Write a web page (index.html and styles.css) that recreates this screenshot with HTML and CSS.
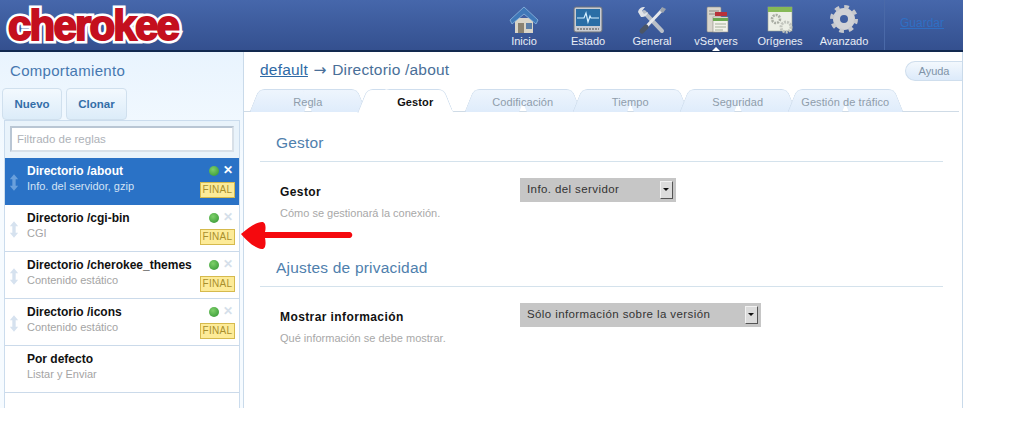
FILE: index.html
```html
<!DOCTYPE html>
<html lang="es">
<head>
    <meta charset="UTF-8">
    <meta name="viewport" content="width=device-width, initial-scale=1.0">
    <title>Cherokee Admin</title>
    <link rel="stylesheet" href="styles.css">
</head>
<body>
    <div class="page">
        <header class="topbar">
            <div class="logo" data-text="cherokee">cherokee</div>
            <nav class="topnav">
                <a class="nav-item">
                    <svg width="30" height="28" viewBox="0 0 30 28">
                        <path d="M6 12h18v15H6z" fill="#d9d4c8"/>
                        <path d="M9 17h6v10H9z" fill="#8a8272"/>
                        <path d="M17 17h6v6h-6z" fill="#5d7fa8"/>
                        <path d="M1 14 15 1l14 13-2 4L15 8 3 18z" fill="#3f78b8" stroke="#8fb8de" stroke-width=".8"/>
                    </svg>
                    <span>Inicio</span>
                </a>
                <a class="nav-item">
                    <svg width="30" height="28" viewBox="0 0 30 28">
                        <rect x="1" y="1" width="28" height="25" rx="2" fill="#c9ccd2" stroke="#6d7078"/>
                        <rect x="3" y="3" width="24" height="17" fill="#2a6ea6"/>
                        <path d="M4 12h7l2-5 2 9 2-6 1 2h8" fill="none" stroke="#d6f0ff" stroke-width="1.2"/>
                        <path d="M4 23h22" stroke="#777" stroke-width="1.5" stroke-dasharray="2 1"/>
                    </svg>
                    <span>Estado</span>
                </a>
                <a class="nav-item">
                    <svg width="30" height="28" viewBox="0 0 30 28">
                        <path d="M7 6 25 25" stroke="#b9bfc8" stroke-width="4" stroke-linecap="round"/>
                        <path d="M1 6a6 6 0 0 1 7-5L5 5l2 3 4-2a6 6 0 0 1-7 5z" fill="#dfe3e8"/>
                        <path d="M26 3 9 21" stroke="#e6e8ec" stroke-width="3"/>
                        <path d="M9 21 5 25" stroke="#4a5566" stroke-width="5" stroke-linecap="round"/>
                        <path d="M25 1l4 2-3 4-3-2z" fill="#9aa2ac"/>
                    </svg>
                    <span>General</span>
                </a>
                <a class="nav-item is-active">
                    <svg width="30" height="30" viewBox="0 0 30 30">
                        <rect x="6" y="3" width="14" height="25" rx="1" fill="#d8d5cc" stroke="#8d8a82" stroke-width=".6"/>
                        <path d="M8 7h10M8 10h10" stroke="#8d8a82"/>
                        <rect x="14" y="8" width="12" height="4" fill="#b8323a"/>
                        <rect x="12" y="13" width="15" height="15" fill="#f2f2ea" stroke="#8d8a82" stroke-width=".6"/>
                        <rect x="12" y="14" width="15" height="3" fill="#6aa84f"/>
                        <path d="M14 20h11M14 23h11M14 26h8" stroke="#a5b09a"/>
                    </svg>
                    <span>vServers</span>
                </a>
                <a class="nav-item">
                    <svg width="30" height="30" viewBox="0 0 30 30">
                        <rect x="3" y="3" width="24" height="24" fill="#ecefe6" stroke="#9ea394" stroke-width=".6"/>
                        <rect x="3" y="3" width="24" height="5" fill="#86b956"/>
                        <circle cx="11" cy="15" r="4" fill="none" stroke="#a9ada4" stroke-width="2.6" stroke-dasharray="2 1"/>
                        <circle cx="21" cy="23" r="5" fill="none" stroke="#c2c5be" stroke-width="3" stroke-dasharray="2 1"/>
                    </svg>
                    <span>Orígenes</span>
                </a>
                <a class="nav-item">
                    <svg width="30" height="30" viewBox="0 0 30 30">
                        <circle cx="15" cy="15" r="7.5" fill="none" stroke="#d0d2d6" stroke-width="7"/>
                        <circle cx="15" cy="15" r="12" fill="none" stroke="#c6c8cd" stroke-width="4" stroke-dasharray="4.6 4.8"/>
                    </svg>
                    <span>Avanzado</span>
                </a>
            </nav>
            <div class="save-box"><a class="save-link">Guardar</a></div>
        </header>

        <div class="columns">
            <aside class="sidebar">
                <h2 class="side-title">Comportamiento</h2>
                <div class="side-buttons">
                    <button class="side-btn">Nuevo</button>
                    <button class="side-btn">Clonar</button>
                </div>
                <div class="rule-panel">
                    <div class="filter-wrap">
                        <input class="filter" type="text" placeholder="Filtrado de reglas">
                    </div>
                    <ul class="rule-list">
                        <li class="rule is-selected">
                            <svg class="updown" width="10" height="17" viewBox="0 0 12 20"><path d="M6 0l5 6H8v8h3l-5 6-5-6h3V6H1z"/></svg>
                            <div class="rule-text">
                                <div class="rule-name">Directorio /about</div>
                                <div class="rule-sub">Info. del servidor, gzip</div>
                            </div>
                            <div class="rule-side">
                                <div class="rule-icons"><i class="dot"></i><b class="close">✕</b></div>
                                <span class="final">FINAL</span>
                            </div>
                        </li>
                        <li class="rule">
                            <svg class="updown" width="10" height="17" viewBox="0 0 12 20"><path d="M6 0l5 6H8v8h3l-5 6-5-6h3V6H1z"/></svg>
                            <div class="rule-text">
                                <div class="rule-name">Directorio /cgi-bin</div>
                                <div class="rule-sub">CGI</div>
                            </div>
                            <div class="rule-side">
                                <div class="rule-icons"><i class="dot"></i><b class="close">✕</b></div>
                                <span class="final">FINAL</span>
                            </div>
                        </li>
                        <li class="rule">
                            <svg class="updown" width="10" height="17" viewBox="0 0 12 20"><path d="M6 0l5 6H8v8h3l-5 6-5-6h3V6H1z"/></svg>
                            <div class="rule-text">
                                <div class="rule-name">Directorio /cherokee_themes</div>
                                <div class="rule-sub">Contenido estático</div>
                            </div>
                            <div class="rule-side">
                                <div class="rule-icons"><i class="dot"></i><b class="close">✕</b></div>
                                <span class="final">FINAL</span>
                            </div>
                        </li>
                        <li class="rule">
                            <svg class="updown" width="10" height="17" viewBox="0 0 12 20"><path d="M6 0l5 6H8v8h3l-5 6-5-6h3V6H1z"/></svg>
                            <div class="rule-text">
                                <div class="rule-name">Directorio /icons</div>
                                <div class="rule-sub">Contenido estático</div>
                            </div>
                            <div class="rule-side">
                                <div class="rule-icons"><i class="dot"></i><b class="close">✕</b></div>
                                <span class="final">FINAL</span>
                            </div>
                        </li>
                        <li class="rule is-default">
                            <div class="rule-text">
                                <div class="rule-name">Por defecto</div>
                                <div class="rule-sub">Listar y Enviar</div>
                            </div>
                        </li>
                    </ul>
                </div>
            </aside>

            <main class="content">
                <div class="crumbs">
                    <div class="crumb-text"><a class="crumb-link">default</a> <span class="crumb-arrow">→</span> Directorio /about</div>
                    <button class="help">Ayuda</button>
                </div>
                <div class="tabs">
                    <div class="tab">Regla</div>
                    <div class="tab is-active">Gestor</div>
                    <div class="tab">Codificación</div>
                    <div class="tab">Tiempo</div>
                    <div class="tab">Seguridad</div>
                    <div class="tab">Gestión de tráfico</div>
                </div>

                <section class="section">
                    <h3 class="section-title">Gestor</h3>
                    <div class="field">
                        <div class="field-info">
                            <div class="field-label">Gestor</div>
                            <div class="field-desc">Cómo se gestionará la conexión.</div>
                        </div>
                        <div class="select select-short">Info. del servidor<i class="select-btn"></i></div>
                    </div>
                </section>

                <section class="section">
                    <h3 class="section-title">Ajustes de privacidad</h3>
                    <div class="field">
                        <div class="field-info">
                            <div class="field-label">Mostrar información</div>
                            <div class="field-desc">Qué información se debe mostrar.</div>
                        </div>
                        <div class="select select-long">Sólo información sobre la versión<i class="select-btn"></i></div>
                    </div>
                </section>
            </main>
        </div>

        <svg class="red-arrow" width="114" height="30" viewBox="0 0 114 30">
            <path d="M1 12C8 6 16 0 22 0c4 0 4 6 3 10l85 0c3 1 3 5 0 6L25 16c1 4 1 11-3 11C14 26 6 18 1 12z" fill="#f5090e"/>
        </svg>
    </div>
</body>
</html>
```

FILE: styles.css
```css
* {
    box-sizing: border-box;
}
body {
    font-family: "Liberation Sans", Arial, sans-serif;
    margin: 0;
    padding: 0;
    background-color: #fff;
}
.page {
    position: relative;
    width: 963px;
    height: 408px;
    display: flex;
    flex-direction: column;
}

/* barra superior */
.topbar {
    height: 52px;
    flex: none;
    display: flex;
    background: linear-gradient(#4667ab, #34508f);
    border-bottom: 2px solid #12294f;
}
.logo {
    position: relative;
    width: 492px;
    font-weight: bold;
    font-size: 42px;
    line-height: 52px;
    letter-spacing: -1.8px;
    padding-left: 8px;
    color: #c40f1e;
    -webkit-text-stroke: 7px #fff;
}
/* segunda capa para engordar las letras */
.logo::after {
    content: attr(data-text);
    position: absolute;
    left: 8px;
    top: 0;
    -webkit-text-stroke: 2px #c40f1e;
}
.topnav {
    display: flex;
}
.nav-item {
    position: relative;
    width: 64px;
    display: flex;
    flex-direction: column;
    align-items: center;
    justify-content: flex-end;
    padding-bottom: 2px;
    color: #e8edf6;
    font-size: 11px;
    line-height: 13px;
}
.nav-item svg {
    margin-bottom: 1px;
}
.is-active::after {
    content: "";
    position: absolute;
    left: 28px;
    bottom: -1px;
    border: 4px solid transparent;
    border-top: 0;
    border-bottom-color: #fff;
}
.save-box {
    margin-left: 8px;
    padding: 13px 0 0 15px;
    border-left: 1px solid #4a69a8;
}
.save-link {
    color: #2f6fc4;
    font-size: 12px;
    line-height: 14px;
    text-decoration: underline;
}

.columns {
    flex: 1;
    display: flex;
    min-height: 0;
}

/* columna izquierda */
.sidebar {
    width: 244px;
    flex: none;
    background: linear-gradient(#e9f4fe, #f6fbff 120px);
    border-right: 1px solid #c9daea;
    display: flex;
    flex-direction: column;
}
.side-title {
    margin: 0;
    padding: 10px 0 0 10px;
    height: 37px;
    font-size: 15px;
    line-height: 18px;
    font-weight: normal;
    color: #4678b0;
    letter-spacing: .3px;
}
.side-buttons {
    display: flex;
    gap: 4px;
    padding-left: 2px;
    height: 32px;
}
.side-btn {
    width: 60px;
    height: 32px;
    padding: 0;
    font-family: inherit;
    font-size: 11.5px;
    font-weight: bold;
    color: #346ea8;
    background: linear-gradient(#f3f9fe, #dcecf9);
    border: 1px solid #d0e0ee;
    border-radius: 4px;
}
.side-btn + .side-btn {
    width: 61px;
}
.rule-panel {
    flex: 1;
    margin: 0 3px 0 4px;
    background: #e9f3fb;
    border: 1px solid #cbdced;
    border-bottom: 0;
}
.filter-wrap {
    height: 37px;
    padding: 5px 5px 0;
}
.filter {
    display: block;
    width: 224px;
    height: 26px;
    padding: 0 5px;
    font-family: inherit;
    font-size: 11.5px;
    border: 2px solid #b9c6d4;
    border-right-color: #d8e0e8;
    border-bottom-color: #d8e0e8;
    background: #fff;
}
.filter::placeholder {
    color: #aeb2b8;
    opacity: 1;
}
.rule-list {
    list-style-type: none;
    margin: 0;
    padding: 0;
    background: #fff;
    height: 250px;
}
.rule {
    height: 47px;
    display: flex;
    border-bottom: 1px solid #cbdaea;
    padding-top: 6px;
}
.updown {
    flex: none;
    margin: 10px 8px 0 4px;
    fill: #d6e2ef;
}
.rule-text {
    flex: 1;
    min-width: 0;
}
.rule-name {
    font-size: 12px;
    line-height: 14px;
    font-weight: bold;
    color: #111;
}
.rule-sub {
    margin-top: 2px;
    font-size: 11px;
    line-height: 13px;
    color: #a4a4a4;
}
.rule-side {
    width: 40px;
    flex: none;
    display: flex;
    flex-direction: column;
    align-items: flex-end;
    padding-right: 4px;
}
.rule-icons {
    height: 13px;
    display: flex;
    align-items: center;
    gap: 4px;
    padding-right: 2px;
}
.dot {
    width: 10px;
    height: 10px;
    border-radius: 50%;
    background: radial-gradient(circle at 40% 35%, #7ed06a, #2f9230);
}
.close {
    font-size: 12px;
    line-height: 13px;
    color: #d5dfea;
}
.final {
    margin-top: 5px;
    width: 35px;
    height: 16px;
    text-align: center;
    font-size: 10px;
    line-height: 14px;
    letter-spacing: .3px;
    color: #a98f2d;
    background: #fdeb98;
    border: 1px solid #d6ba4d;
}
.is-selected {
    background: #2a72c6;
    border-bottom-color: #2a72c6;
}
.is-selected .rule-name {
    color: #fff;
}
.is-selected .rule-sub {
    color: #d3e3f5;
}
.is-selected .close {
    color: #fff;
}
.is-selected .updown {
    fill: #6aa0dc;
}
.is-default {
    padding-left: 22px;
}

/* contenido */
.content {
    flex: 1;
    min-width: 0;
    border-right: 1px solid #c9daea;
}
.crumbs {
    height: 37px;
    display: flex;
    justify-content: space-between;
    padding: 9px 0 0 16px;
}
.crumb-text {
    font-size: 15.5px;
    line-height: 18px;
    color: #4a6f98;
    letter-spacing: .2px;
}
.crumb-link {
    color: #2f6aa6;
    text-decoration: underline;
}
.crumb-arrow {
    font-family: "DejaVu Sans", sans-serif;
    margin: 0 1px;
}
.help {
    width: 57px;
    height: 20px;
    padding: 0;
    font-family: inherit;
    font-size: 11px;
    color: #7f93a8;
    background: linear-gradient(#f3f8fd, #dceafa);
    border: 1px solid #cfdeed;
    border-right: 0;
    border-radius: 10px 0 0 10px;
}
.tabs {
    display: flex;
    height: 23px;
    padding-left: 10px;
    border-bottom: 1px solid #cfdbe6;
    margin-right: 3px;
}
.tab {
    position: relative;
    z-index: 0;
    width: 107.5px;
    height: 23px;
    text-align: center;
    font-size: 11px;
    letter-spacing: .1px;
    line-height: 26px;
    color: #8f9dab;
}
.tab::before,
.tab::after {
    content: "";
    position: absolute;
    z-index: -1;
    top: 0;
    bottom: 0;
    width: 50%;
    background: linear-gradient(#eef5fd, #dfecfb);
    border-top: 1px solid #cfdeee;
}
.tab::before {
    left: 0;
    border-left: 1px solid #cfdeee;
    border-radius: 6px 0 0 0;
    transform: skewX(-22deg);
}
.tab::after {
    right: 0;
    border-right: 1px solid #cfdeee;
    border-radius: 0 6px 0 0;
    transform: skewX(22deg);
}
.tab.is-active {
    font-weight: bold;
    color: #111;
    height: 24px;
}
.tab.is-active::before,
.tab.is-active::after {
    background: #fff;
}
.section {
    padding: 0 19px 0 16px;
}
.section-title {
    margin: 0;
    padding: 21px 0 9px 16px;
    font-size: 15.5px;
    line-height: 19px;
    font-weight: normal;
    color: #4f80ad;
    border-bottom: 1px solid #d4e2ec;
    letter-spacing: .2px;
}
.field {
    display: flex;
    padding-top: 16px;
    height: 75px;
}
.field-info {
    width: 260px;
    padding: 7px 0 0 20px;
}
.field-label {
    font-size: 12px;
    line-height: 14px;
    font-weight: bold;
    letter-spacing: .4px;
    color: #111;
}
.field-desc {
    margin-top: 8px;
    font-size: 11px;
    line-height: 13px;
    color: #a8a8a8;
}
.select {
    height: 24px;
    position: relative;
    padding-left: 7px;
    font-size: 11.5px;
    line-height: 23px;
    letter-spacing: .4px;
    color: #333;
    background: #c6c6c6;
}
.select-short {
    width: 156px;
}
.select-long {
    width: 241px;
}
.select-btn {
    position: absolute;
    top: 3px;
    right: 3px;
    width: 13px;
    height: 18px;
    background: #dcdcdc;
    border: 1px solid;
    border-color: #f2f2f2 #555 #555 #f2f2f2;
}
.select-btn::after {
    content: "";
    position: absolute;
    top: 6px;
    left: 2px;
    border: 3.5px solid transparent;
    border-bottom: 0;
    border-top-color: #111;
}
.red-arrow {
    position: absolute;
    left: 240px;
    top: 222px;
}
```
